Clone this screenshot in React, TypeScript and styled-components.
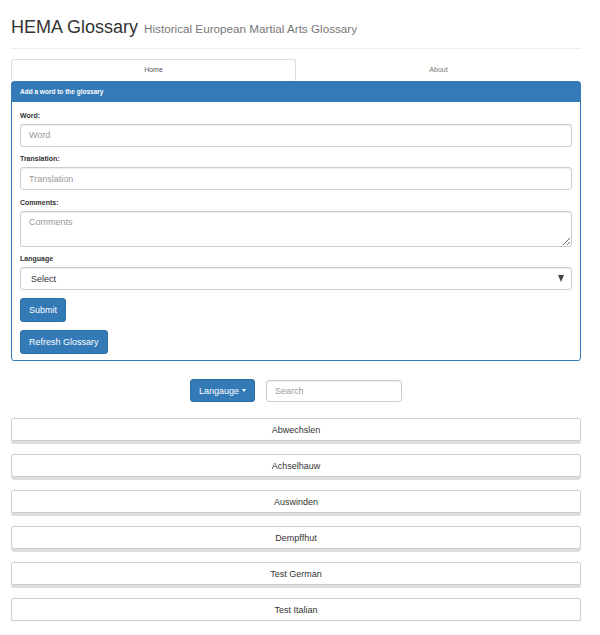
import React from "react";
import styled, { createGlobalStyle } from "styled-components";

const GlobalStyle = createGlobalStyle`
  html, body { margin: 0; padding: 0; background: #fff; }
  body { font-family: "Liberation Sans", Arial, Helvetica, sans-serif; color: #333; }
  * { box-sizing: border-box; }
`;

const Page = styled.div`
  width: 570px;
  margin-left: 11px;
  padding-top: 16.5px;
`;

const Header = styled.div`
  border-bottom: 1px solid #eee;
  padding-bottom: 9px;
  margin-bottom: 10px;
`;

const Title = styled.h1`
  margin: 0;
  font-size: 18px;
  line-height: 20px;
  font-weight: 400;
  color: #333;
`;

const Subtitle = styled.small`
  font-size: 11.7px;
  color: #777;
  margin-left: 1px;
`;

const Tabs = styled.ul`
  display: flex;
  list-style: none;
  margin: 0;
  padding: 0;
  border-bottom: 1px solid #ddd;
`;

const Tab = styled.li<{ $active?: boolean }>`
  flex: 1;
  height: 22px;
  margin-bottom: -1px;
  display: flex;
  align-items: center;
  justify-content: center;
  font-size: 7px;
  color: ${(p) => (p.$active ? "#555" : "#777")};
  border: 1px solid ${(p) => (p.$active ? "#ddd" : "transparent")};
  border-bottom-color: transparent;
  border-radius: 3px 3px 0 0;
  background: #fff;
`;

const Panel = styled.div`
  border: 1px solid #337ab7;
  border-radius: 3px;
`;

const PanelHeading = styled.div`
  background: #337ab7;
  color: #fff;
  font-size: 6.5px;
  font-weight: 700;
  height: 20px;
  line-height: 20px;
  padding: 0 8px;
`;

const PanelBody = styled.div`
  padding: 9px 8px 6px;
`;

const Group = styled.div`
  margin-bottom: 7.5px;
`;

const Label = styled.label`
  display: block;
  font-size: 7px;
  font-weight: 700;
  line-height: 10px;
  margin-bottom: 3px;
  color: #333;
`;

const fieldBase = `
  display: block;
  width: 100%;
  height: 23px;
  border: 1px solid #ccc;
  border-radius: 3px;
  box-shadow: inset 0 1px 1px rgba(0,0,0,.075);
  font-family: "Liberation Sans", Arial, sans-serif;
  font-size: 9px;
  color: #555;
  padding: 0 8px;
  background: #fff;
  outline: none;
  &::placeholder { color: #999; }
`;

const Input = styled.input`
  ${fieldBase}
`;

const TextArea = styled.textarea`
  ${fieldBase}
  height: 36px;
  padding-top: 5px;
  resize: vertical;
`;

const SelectWrap = styled.div`
  position: relative;
`;

const Select = styled.select`
  ${fieldBase}
  appearance: none;
  -webkit-appearance: none;
  padding-left: 10px;
  color: #333;
`;

const SelectArrow = styled.span`
  position: absolute;
  right: 8px;
  top: 8px;
  width: 0;
  height: 0;
  border-left: 3.5px solid transparent;
  border-right: 3.5px solid transparent;
  border-top: 7px solid #444;
  pointer-events: none;
`;

const Button = styled.button<{ $pad?: number; $h?: number }>`
  display: inline-flex;
  align-items: center;
  justify-content: center;
  height: ${(p) => p.$h ?? 24}px;
  padding: 0 ${(p) => p.$pad ?? 8}px;
  background: #337ab7;
  border: 1px solid #2e6da4;
  border-radius: 3px;
  color: #fff;
  font-family: "Liberation Sans", Arial, sans-serif;
  font-size: 9px;
  cursor: pointer;
`;

const ButtonStack = styled.div`
  display: flex;
  flex-direction: column;
  align-items: flex-start;
  gap: 8px;
`;

const Toolbar = styled.div`
  display: flex;
  justify-content: center;
  align-items: center;
  gap: 11px;
  margin-top: 18.5px;
  margin-bottom: 16px;
`;

const Caret = styled.span`
  display: inline-block;
  margin-left: 3px;
  width: 0;
  height: 0;
  border-left: 2.5px solid transparent;
  border-right: 2.5px solid transparent;
  border-top: 3px solid #fff;
`;

const SearchInput = styled.input`
  ${fieldBase}
  width: 136px;
  height: 22px;
`;

const List = styled.div`
  display: flex;
  flex-direction: column;
  gap: 13px;
`;

const Item = styled.div`
  height: 23px;
  border: 1px solid #ccc;
  border-radius: 3px;
  background: #fff;
  box-shadow: 0 3px 0 #ddd;
  display: flex;
  align-items: center;
  justify-content: center;
  font-size: 9px;
  color: #333;
`;

const words = ["Abwechslen", "Achselhauw", "Auswinden", "Dempffhut", "Test German", "Test Italian"];

export default function App() {
  return (
    <>
      <GlobalStyle />
      <Page>
        <Header>
          <Title>
            HEMA Glossary <Subtitle>Historical European Martial Arts Glossary</Subtitle>
          </Title>
        </Header>
        <Tabs>
          <Tab $active>Home</Tab>
          <Tab>About</Tab>
        </Tabs>
        <Panel>
          <PanelHeading>Add a word to the glossary</PanelHeading>
          <PanelBody>
            <Group>
              <Label>Word:</Label>
              <Input placeholder="Word" />
            </Group>
            <Group>
              <Label>Translation:</Label>
              <Input placeholder="Translation" />
            </Group>
            <Group>
              <Label>Comments:</Label>
              <TextArea placeholder="Comments" />
            </Group>
            <Group>
              <Label>Language</Label>
              <SelectWrap>
                <Select defaultValue="">
                  <option value="">Select</option>
                  <option value="de">German</option>
                  <option value="it">Italian</option>
                </Select>
                <SelectArrow />
              </SelectWrap>
            </Group>
            <ButtonStack>
              <Button>Submit</Button>
              <Button>Refresh Glossary</Button>
            </ButtonStack>
          </PanelBody>
        </Panel>
        <Toolbar>
          <Button $h={23}>
            Langauge <Caret />
          </Button>
          <SearchInput placeholder="Search" />
        </Toolbar>
        <List>
          {words.map((w) => (
            <Item key={w}>{w}</Item>
          ))}
        </List>
      </Page>
    </>
  );
}
